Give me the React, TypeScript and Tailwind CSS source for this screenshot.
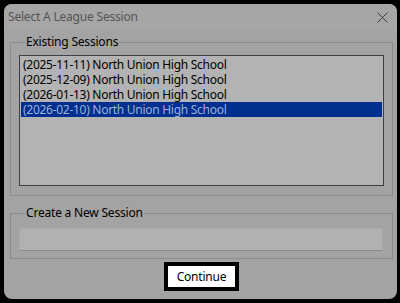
import { useState } from "react";

const sessions = [
  { id: "1", label: "(2025-11-11) North Union High School" },
  { id: "2", label: "(2025-12-09) North Union High School" },
  { id: "3", label: "(2026-01-13) North Union High School" },
  { id: "4", label: "(2026-02-10) North Union High School" },
];

export default function App() {
  const [selected, setSelected] = useState("4");
  const [name, setName] = useState("");

  return (
    <div
      className="w-[400px] h-[303px] bg-black pl-[4px] pt-[4px] pr-[3px] pb-[4px]"
      style={{ fontFamily: '"Noto Sans", "Open Sans", sans-serif' }}
    >
      <div className="w-full h-full bg-[#a3a3a3] rounded-[8px] overflow-hidden flex flex-col">
        {/* Title bar */}
        <div className="h-[26px] flex items-center justify-between pl-[4px] pr-[9px] bg-[#a6a6a6]">
          <span className="text-[12px] leading-[14px] tracking-[-0.2px] text-[#555555]">Select A League Session</span>
          <svg width="11" height="11" viewBox="0 0 11 11" className="text-[#3f3f3f]">
            <path d="M0.5 0.5 L10.5 10.5 M10.5 0.5 L0.5 10.5" stroke="currentColor" strokeWidth="1" fill="none" />
          </svg>
        </div>

        <div className="flex flex-col pl-[6px] pr-[4px]">
          {/* Existing sessions */}
          <fieldset className="mt-[5px] border border-[#8c8c8c] px-[8px] pb-[9px] pt-[6px]">
            <legend className="ml-[6px] px-[1px] text-[12px] leading-[14px] tracking-[-0.2px] text-black">Existing Sessions</legend>
            <div className="h-[131px] border border-[#3a3f4a] bg-[#b3b3b3] p-[1px]">
              {sessions.map((s) => (
                <div
                  key={s.id}
                  onClick={() => setSelected(s.id)}
                  className={
                    "h-[15px] pl-[2px] text-[12px] leading-[15px] tracking-[-0.28px] whitespace-nowrap cursor-default " +
                    (selected === s.id ? "bg-[#002f8f] text-[#9fb1d8]" : "text-black")
                  }
                >
                  {s.label}
                </div>
              ))}
            </div>
          </fieldset>

          {/* New session */}
          <fieldset className="mt-[10px] border border-[#8c8c8c] px-[8px] pb-[7px] pt-[8px]">
            <legend className="ml-[6px] px-[1px] text-[12px] leading-[14px] tracking-[-0.2px] text-black">Create a New Session</legend>
            <input
              value={name}
              onChange={(e) => setName(e.target.value)}
              className="block w-[364px] h-[23px] bg-[#b1b1b1] border border-[#a9a9a9] border-b-[#8a8a8a] outline-none text-[12px] px-[3px]"
            />
          </fieldset>

          <div className="flex justify-center mt-[3px]">
            <button className="w-[75px] h-[29px] border-[4px] border-black bg-white text-[12px] tracking-[-0.2px] text-black leading-none">
              Continue
            </button>
          </div>
        </div>
      </div>
    </div>
  );
}
